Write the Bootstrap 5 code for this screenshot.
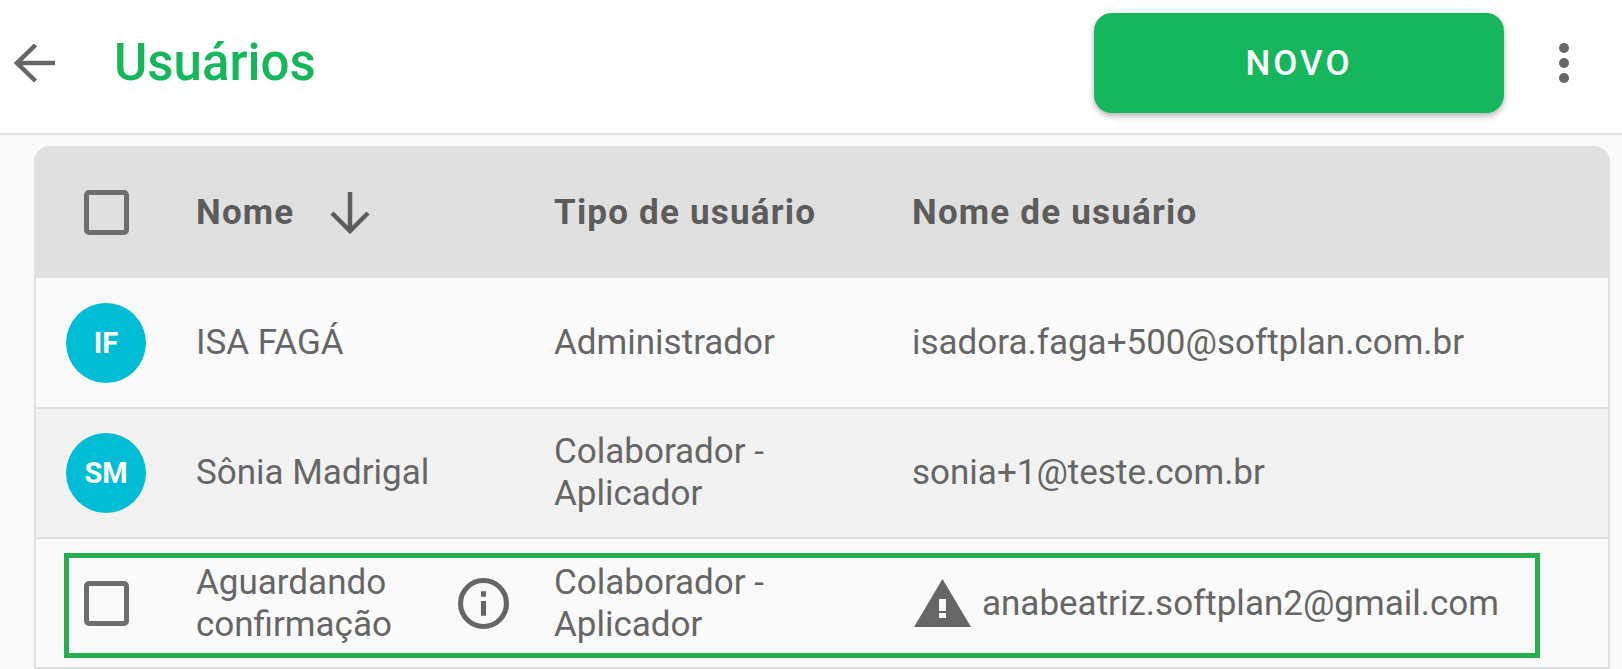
<!DOCTYPE html>
<html lang="pt-BR">
<head>
  <meta charset="UTF-8">
  <meta name="viewport" content="width=device-width, initial-scale=1.0">
  <title>Usuários</title>
  <link href="https://cdn.jsdelivr.net/npm/bootstrap@5.3.0/dist/css/bootstrap.min.css" rel="stylesheet">
  <style>
    body {
      background: #fafafa;
      font-family: Roboto, "Liberation Sans", sans-serif;
      color: #666;
      height: 669px;
      overflow: hidden;
    }
    /* barra do topo */
    .top-bar {
      height: 135px;
      background: #fff;
      border-bottom: 2px solid #e0e0e0;
      padding: 0 0 8px 14px;
    }
    .back-icon { width: 41px; height: 40px; margin-right: 59px; }
    .page-title {
      font-size: 51px;
      font-weight: 500;
      color: #16b65d;
      margin: 0;
    }
    .btn-novo {
      width: 410px;
      height: 100px;
      margin: 0 55px 0 auto;
      padding-top: 10px;
      background: #16b65d;
      border: 0;
      border-radius: 18px;
      color: #fff;
      font-size: 35px;
      font-weight: 500;
      letter-spacing: 3px;
      box-shadow: 0 3px 6px rgba(0, 0, 0, .3);
    }
    .btn-novo:hover { background: #16b65d; color: #fff; }
    .kebab { width: 10px; margin-right: 53px; gap: 5px; }
    .kebab span { width: 10px; height: 10px; border-radius: 50%; background: #666; }

    /* tabela */
    .users-box {
      margin: 11px 12px 0 34px;
      border: solid #e0e0e0;
      border-width: 0 2px 2px 2px;
      border-radius: 18px 18px 0 0;
    }
    .users-row {
      display: grid;
      grid-template-columns: 160px 358px 358px 1fr;
      align-items: center;
      font-size: 35px;
      line-height: 42px;
      border-bottom: 2px solid #e0e0e0;
    }
    .users-row:last-child { border-bottom: 0; }
    .users-head {
      height: 132px;
      background: #e0e0e0;
      color: #5c5c5c;
      border-radius: 16px 16px 0 0;
      font-weight: 700;
      letter-spacing: 1.2px;
      margin: 0 -2px;
      padding: 1px 2px 0;
      border-bottom: 0;
    }
    .row-a { height: 131px; background: #fafafa; }
    .row-b { height: 130px; background: #f2f2f2; }
    .row-c { height: 128px; background: #fafafa; padding: 14px 68px 9px 28px; }
    .pending-box {
      grid-column: 1 / -1;
      height: 105px;
      display: grid;
      grid-template-columns: 127px 358px 358px 1fr;
      align-items: center;
      border: 5px solid #27ae50;
      padding-bottom: 4px;
    }
    .check-box {
      width: 45px;
      height: 45px;
      margin-left: 48px;
      border: 5px solid #6e6e6e;
      border-radius: 5px;
    }
    .pending-box .check-box { margin-left: 15px; }
    .avatar {
      width: 80px;
      height: 80px;
      margin-left: 30px;
      border-radius: 50%;
      background: #00bcd4;
      color: #fff;
      font-size: 29px;
      font-weight: 700;
    }
    .sort-icon { width: 40px; height: 42px; margin-left: 36px; }
    .info-icon { width: 51px; height: 51px; margin-right: 45px; flex-shrink: 0; }
    .warn-icon { width: 57px; height: 48px; margin: 0 11px 2px 2px; flex-shrink: 0; }
  </style>
</head>
<body>
  <header class="top-bar d-flex align-items-center">
    <svg class="back-icon" viewBox="0 0 41 40" fill="none" stroke="#666" stroke-width="4.5">
      <path d="M41 20H3M21.5 2 3 20l18.5 18"/>
    </svg>
    <h1 class="page-title">Usuários</h1>
    <button type="button" class="btn btn-novo">NOVO</button>
    <div class="kebab d-flex flex-column">
      <span></span><span></span><span></span>
    </div>
  </header>

  <main class="users-box">
    <div class="users-row users-head">
      <div class="check-box"></div>
      <div class="d-flex align-items-center">
        Nome
        <svg class="sort-icon" viewBox="0 0 40 42" fill="none" stroke="#5c5c5c" stroke-width="4.5">
          <path d="M20 0v38M2 21l18 18 18-18"/>
        </svg>
      </div>
      <div>Tipo de usuário</div>
      <div>Nome de usuário</div>
    </div>

    <div class="users-row row-a">
      <div class="avatar d-flex align-items-center justify-content-center">IF</div>
      <div>ISA FAGÁ</div>
      <div>Administrador</div>
      <div>isadora.faga+500@softplan.com.br</div>
    </div>

    <div class="users-row row-b">
      <div class="avatar d-flex align-items-center justify-content-center">SM</div>
      <div>Sônia Madrigal</div>
      <div>Colaborador -<br>Aplicador</div>
      <div>sonia+1@teste.com.br</div>
    </div>

    <div class="users-row row-c">
      <div class="pending-box">
        <div class="check-box"></div>
        <div class="d-flex align-items-center justify-content-between">
          <span>Aguardando<br>confirmação</span>
          <svg class="info-icon" viewBox="0 0 50 50" fill="none" stroke="#666">
            <circle cx="25" cy="25" r="22.5" stroke-width="5"/>
            <path d="M25 22.5V37M25 13v5.5" stroke-width="5"/>
          </svg>
        </div>
        <div>Colaborador -<br>Aplicador</div>
        <div class="d-flex align-items-center">
          <svg class="warn-icon" viewBox="0 0 57 48">
            <path fill="#666" fill-rule="evenodd" d="M28.5 0 57 48H0ZM25 20v12h7V20Zm0 14v5h7v-5Z"/>
          </svg>
          <span>anabeatriz.softplan2@gmail.com</span>
        </div>
      </div>
    </div>
  </main>

  <script src="https://cdn.jsdelivr.net/npm/bootstrap@5.3.0/dist/js/bootstrap.bundle.min.js"></script>
</body>
</html>
